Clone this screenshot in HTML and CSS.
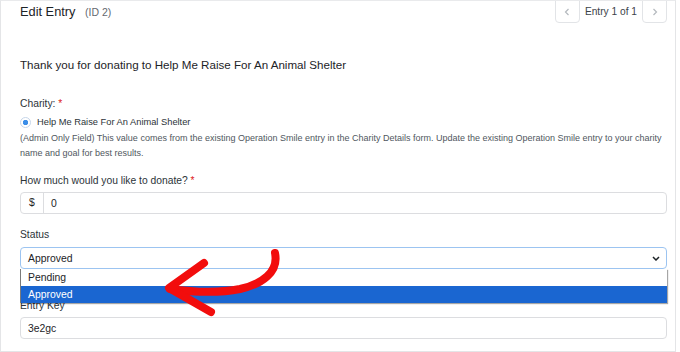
FILE: index.html
```html
<!DOCTYPE html>
<html>
    <head>
        <title>Edit Entry</title>
        <link rel="stylesheet" href="styles.css">
    </head>
    <body>
        <div class="card">
            <div class="header">
                <h1 class="title">Edit Entry <span class="entry-id">(ID 2)</span></h1>
                <div class="pager">
                    <span class="page-btn">
                        <svg width="6" height="8" viewBox="0 0 6 8"><path d="M4.5 1 L1.5 4 L4.5 7" fill="none" stroke="#b4b9be" stroke-width="1.2"/></svg>
                    </span>
                    <span class="page-label">Entry 1 of 1</span>
                    <span class="page-btn">
                        <svg width="6" height="8" viewBox="0 0 6 8"><path d="M1.5 1 L4.5 4 L1.5 7" fill="none" stroke="#b4b9be" stroke-width="1.2"/></svg>
                    </span>
                </div>
            </div>

            <p class="intro">Thank you for donating to Help Me Raise For An Animal Shelter</p>

            <div class="field">
                <label class="label">Charity: <span class="req">*</span></label>
                <div class="radio-row"><span class="radio"></span>Help Me Raise For An Animal Shelter</div>
                <p class="desc">(Admin Only Field) This value comes from the existing Operation Smile entry in the Charity Details form. Update the existing Operation Smile entry to your charity<br>name and goal for best results.</p>
            </div>

            <div class="field field-amount">
                <label class="label">How much would you like to donate? <span class="req">*</span></label>
                <div class="input input-group">
                    <span class="prefix">$</span>
                    <span class="value">0</span>
                </div>
            </div>

            <div class="field field-status">
                <label class="label">Status</label>
                <div class="select-wrap">
                    <div class="input select">
                        <span class="value">Approved</span>
                        <svg width="8" height="5" viewBox="0 0 8 5"><path d="M1 1 L4 4 L7 1" fill="none" stroke="#1d2327" stroke-width="1.5"/></svg>
                    </div>
                    <ul class="dropdown">
                        <li>Pending</li>
                        <li class="selected">Approved</li>
                    </ul>
                </div>
            </div>

            <div class="field field-key">
                <label class="label">Entry Key</label>
                <div class="input">
                    <span class="value">3e2gc</span>
                </div>
            </div>

            <svg class="arrow" width="680" height="352" viewBox="0 0 680 352">
                <path d="M275 253 C279 272 262 284 240 289 C215 294 192 292 170 289" fill="none" stroke="#f20d0d" stroke-width="8" stroke-linecap="round"/>
                <path d="M204 263 L169 288 L211 312" fill="none" stroke="#f20d0d" stroke-width="8" stroke-linecap="round" stroke-linejoin="round"/>
            </svg>
        </div>
    </body>
</html>
```

FILE: styles.css
```css
html, body {
    margin: 0;
    padding: 0;
    background: #ffffff;
}
body {
    font-family: "Liberation Sans", Arial, sans-serif;
    color: #1d2327;
}
.card {
    position: relative;
    box-sizing: border-box;
    width: 676px;
    height: 352px;
    border: 1px solid #e4e5e7;
    border-top-color: #e9eaec;
    padding: 0 8px 0 19px;
    overflow: hidden;
}
.header {
    display: flex;
    justify-content: space-between;
    align-items: flex-start;
    height: 22px;
}
.title {
    margin: 0;
    font-size: 12.8px;
    font-weight: normal;
    line-height: 21px;
    color: #1d2327;
}
.entry-id {
    margin-left: 6px;
    font-size: 10.5px;
    color: #646970;
}
.pager {
    display: flex;
    align-items: flex-start;
    gap: 5px;
}
.page-btn {
    display: flex;
    align-items: center;
    justify-content: center;
    box-sizing: border-box;
    width: 25px;
    height: 26px;
    margin-top: -4px;
    padding-top: 3px;
    border: 1px solid #e2e4e7;
    border-radius: 4px;
}
.page-label {
    font-size: 10.2px;
    line-height: 21px;
    color: #3c434a;
}
.intro {
    margin: 33px 0 0;
    font-size: 11.6px;
    line-height: 18px;
}
.field {
    margin-top: 22px;
}
.label {
    display: block;
    font-size: 10.3px;
    line-height: 16px;
    color: #2c3338;
}
.req {
    color: #d22;
}
.radio-row {
    display: flex;
    align-items: center;
    gap: 6px;
    margin-top: 1px;
    font-size: 9.3px;
    line-height: 18px;
    color: #2c3338;
}
.radio {
    box-sizing: border-box;
    width: 11px;
    height: 11px;
    border: 1px solid #c6d6ea;
    border-radius: 50%;
    background: radial-gradient(circle, #3b8ee8 0, #3b8ee8 2.4px, #ffffff 3px);
}
.desc {
    margin: 0;
    font-size: 9px;
    line-height: 15px;
    color: #50575e;
}
.field-amount {
    margin-top: 12px;
}
.input {
    display: flex;
    align-items: center;
    box-sizing: border-box;
    height: 22px;
    margin-top: 3px;
    border: 1px solid #dcdde0;
    border-radius: 4px;
    font-size: 10.4px;
    color: #1d2327;
}
.input .value {
    padding-left: 7px;
}
.prefix {
    width: 23px;
    height: 100%;
    box-sizing: border-box;
    border-right: 1px solid #dcdde0;
    line-height: 20px;
    text-align: center;
}
.field-status {
    margin-top: 13px;
}
.select-wrap {
    position: relative;
    margin-top: 4px;
}
.select {
    margin-top: 0;
    justify-content: space-between;
    padding-right: 6px;
    border-color: #9cc4f1;
}
.dropdown {
    position: absolute;
    left: 0;
    right: 0;
    top: 100%;
    z-index: 2;
    margin: 0;
    padding: 0;
    list-style: none;
    background: #ffffff;
    border-left: 1px solid #7a7a7a;
    box-shadow: 1px 1px 1px rgba(0, 0, 0, 0.35);
    font-size: 10.4px;
}
.dropdown li {
    height: 17px;
    padding-left: 7px;
    line-height: 17px;
    color: #1d2327;
}
.dropdown li.selected {
    background: #1a66d1;
    color: #ffffff;
}
.field-key {
    margin-top: 29px;
}
.field-key .input {
    margin-top: 3px;
}
.arrow {
    position: absolute;
    left: -1px;
    top: -1px;
    z-index: 3;
    pointer-events: none;
}
```
